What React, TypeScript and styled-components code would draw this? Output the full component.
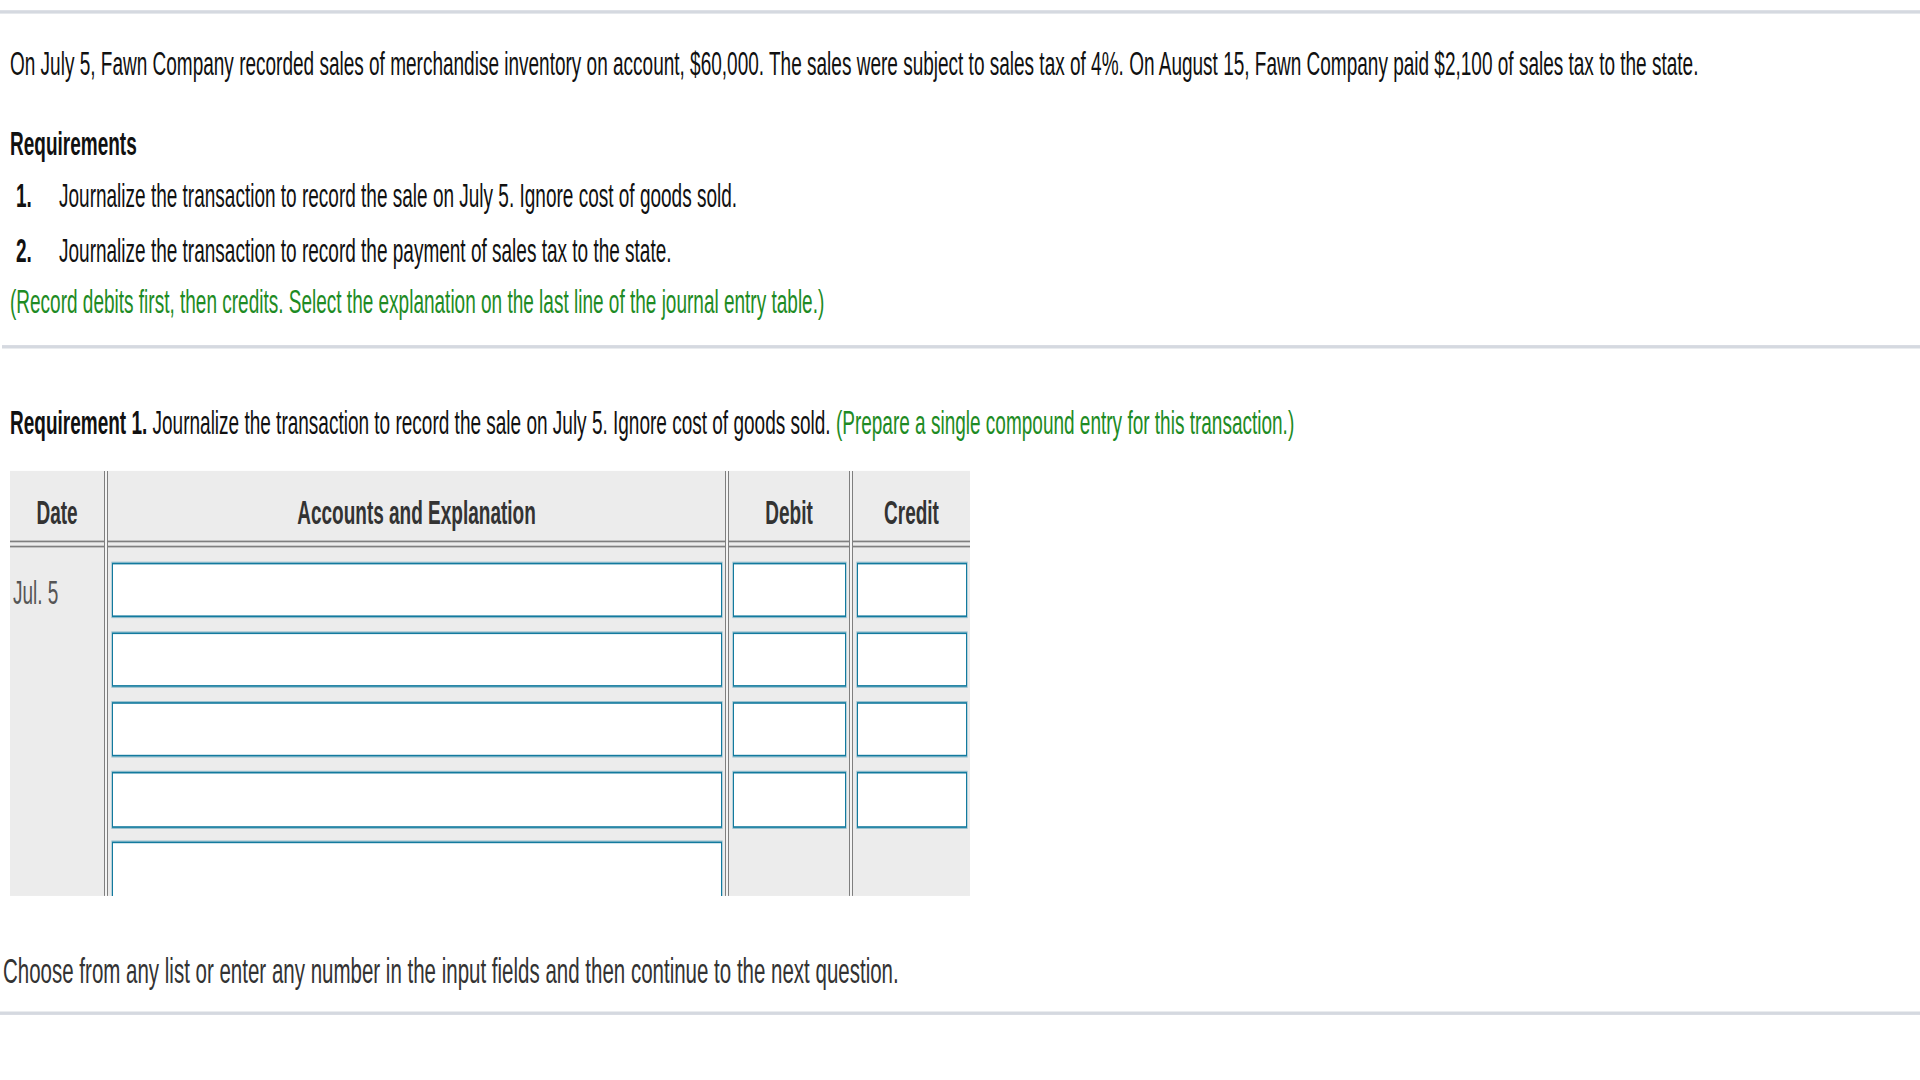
import styled, { createGlobalStyle } from 'styled-components';

// the reference shot is stretched vertically, so the page is laid out flat and scaled once
const STRETCH = 1.7;

const GlobalStyle = createGlobalStyle`
  html, body {
    margin: 0;
    padding: 0;
    background: #fff;
  }
  body {
    font-family: 'Liberation Sans', Arial, sans-serif;
  }
`;

const Frame = styled.div`
  width: 1920px;
  height: 1080px;
  overflow: hidden;
`;

const Stage = styled.div`
  width: 1920px;
  height: ${1080 / STRETCH}px;
  padding-top: 6px;
  box-sizing: border-box;
  transform: scaleY(${STRETCH});
  transform-origin: 0 0;
  font-size: 19px;
  line-height: 22px;
  color: #111;
`;

const Rule = styled.div<{ $inset?: number; $top?: number }>`
  margin: ${(p) => p.$top ?? 0}px 0 0 ${(p) => p.$inset ?? 0}px;
  border-top: 2px solid #d5d9e0;
`;

const Question = styled.section`
  padding-left: 10px;
`;

const Intro = styled.p`
  margin: 19.3px 0 0;
  white-space: nowrap;
`;

const Heading = styled.h3`
  margin: 24.3px 0 0;
  font-size: 19px;
  font-weight: bold;
  line-height: 22px;
`;

const Steps = styled.div`
  display: flex;
  flex-direction: column;
  gap: 10px;
  margin-top: 9px;
`;

const Step = styled.div`
  display: flex;
`;

const StepNo = styled.span`
  width: 43px;
  padding-left: 6px;
  font-weight: bold;
`;

const Note = styled.p`
  margin: 8px 0 0;
  color: #1e8b24;
`;

const Prompt = styled.p`
  margin: 33.2px 0 0;
  white-space: nowrap;
`;

const Hint = styled.span`
  color: #1e8b24;
`;

const Journal = styled.div`
  display: flex;
  width: 960px;
  height: 250px;
  margin-top: 16.2px;
  overflow: hidden;
  background: #ececec;
`;

const Column = styled.div<{ $width: number }>`
  display: flex;
  flex-direction: column;
  width: ${(p) => p.$width}px;
`;

const HeadCell = styled.div`
  flex: none;
  box-sizing: border-box;
  height: 42.1px;
  padding-top: 14.3px;
  margin-bottom: 2.6px;
  border-bottom: 1px solid #7f7f7f;
  text-align: center;
  font-weight: bold;
  color: #333;
`;

const BodyCell = styled.div`
  flex: 1;
  min-height: 0;
  overflow: hidden;
  display: flex;
  flex-direction: column;
  gap: 8.8px;
  padding: 8.4px 3px 0 4px;
  border-top: 1px solid #7f7f7f;
`;

const DateCell = styled.div`
  flex: 1;
  padding: 16.1px 0 0 3px;
  border-top: 1px solid #7f7f7f;
  color: #555;
`;

const Divider = styled.div`
  box-sizing: border-box;
  width: 4px;
  border-left: 1px solid #7f7f7f;
  border-right: 1px solid #7f7f7f;
  background: #f4f4f4;
`;

// the explanation line runs past the clipped bottom of the table
const Field = styled.input<{ $tall?: boolean }>`
  display: block;
  box-sizing: border-box;
  width: 100%;
  height: ${(p) => (p.$tall ? 48 : 32.4)}px;
  flex: none;
  margin: 0;
  padding: 0 4px;
  border: 1px solid #137a9e;
  box-shadow: 0 0 0 0.6px rgba(19, 122, 158, 0.4);
  border-radius: 0;
  background: #fff;
  font: inherit;
  outline: none;
`;

const Footer = styled.p`
  margin: 33px 0 0;
  padding-left: 3px;
  font-size: 20.5px;
  color: #333;
`;

const fields = (count: number, label: string, withExplanation = false) =>
  Array.from({ length: count }, (_, i) => (
    <Field
      key={i}
      type="text"
      aria-label={`${label} ${i + 1}`}
      $tall={withExplanation && i === count - 1}
      readOnly
    />
  ));

const App = () => {
  return (
    <>
      <GlobalStyle />
      <Frame>
        <Stage>
          <Rule />
          <Question>
            <Intro>
              On July 5, Fawn Company recorded sales of merchandise inventory on account, $60,000. The sales were
              subject to sales tax of 4%. On August 15, Fawn Company paid $2,100 of sales tax to the state.
            </Intro>
            <Heading>Requirements</Heading>
            <Steps>
              <Step>
                <StepNo>1.</StepNo>
                Journalize the transaction to record the sale on July 5. Ignore cost of goods sold.
              </Step>
              <Step>
                <StepNo>2.</StepNo>
                Journalize the transaction to record the payment of sales tax to the state.
              </Step>
            </Steps>
            <Note>
              (Record debits first, then credits. Select the explanation on the last line of the journal entry table.)
            </Note>
          </Question>
          <Rule $inset={2} $top={14.6} />
          <Question>
            <Prompt>
              <b>Requirement 1.</b> Journalize the transaction to record the sale on July 5. Ignore cost of goods
              sold. <Hint>(Prepare a single compound entry for this transaction.)</Hint>
            </Prompt>
            <Journal>
              <Column $width={94}>
                <HeadCell>Date</HeadCell>
                <DateCell>Jul. 5</DateCell>
              </Column>
              <Divider />
              <Column $width={617}>
                <HeadCell>Accounts and Explanation</HeadCell>
                <BodyCell>{fields(5, 'Account', true)}</BodyCell>
              </Column>
              <Divider />
              <Column $width={120}>
                <HeadCell>Debit</HeadCell>
                <BodyCell>{fields(4, 'Debit')}</BodyCell>
              </Column>
              <Divider />
              <Column $width={117}>
                <HeadCell>Credit</HeadCell>
                <BodyCell>{fields(4, 'Credit')}</BodyCell>
              </Column>
            </Journal>
          </Question>
          <Footer>
            Choose from any list or enter any number in the input fields and then continue to the next question.
          </Footer>
          <Rule $top={13} />
        </Stage>
      </Frame>
    </>
  );
};

export default App;
